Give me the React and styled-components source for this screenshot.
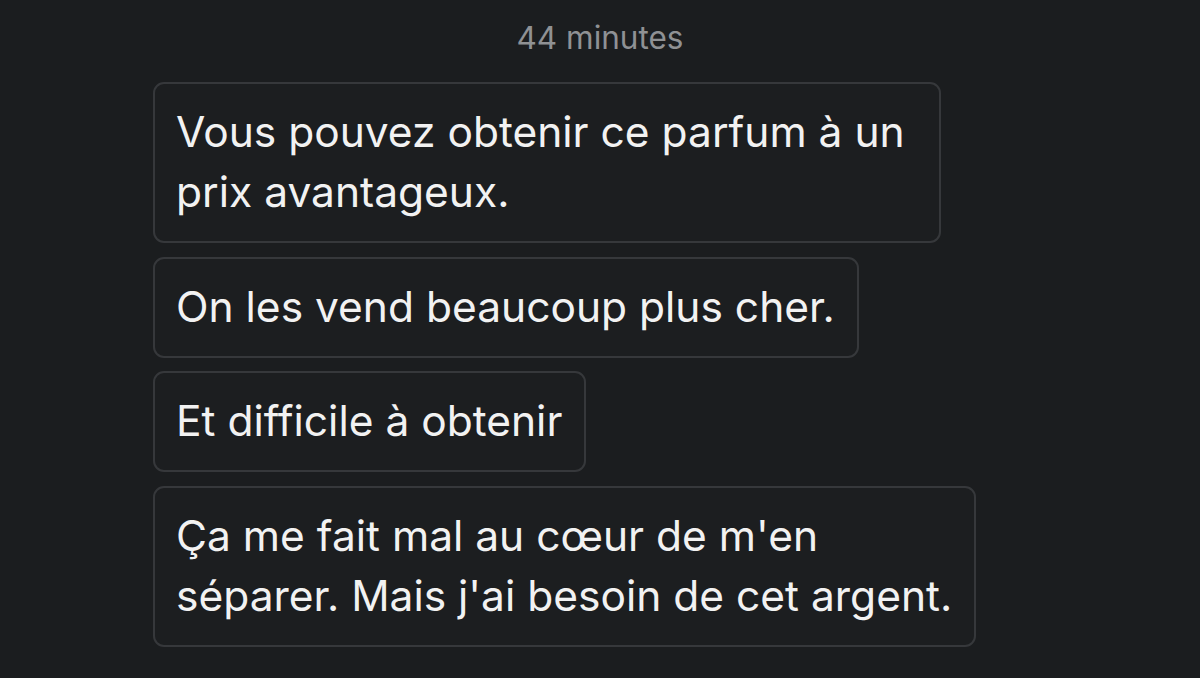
import React from "react";
import styled, { createGlobalStyle } from "styled-components";

const Global = createGlobalStyle`
  html, body { margin: 0; padding: 0; background: #1b1d1f; }
  body { font-family: Inter, "Noto Sans", sans-serif; -webkit-font-smoothing: antialiased; }
`;

const Page = styled.div`
  width: 1200px;
  height: 678px;
  overflow: hidden;
  background: #1b1d1f;
  box-sizing: border-box;
  padding-top: 18px;
  display: flex;
  flex-direction: column;
`;

const Stamp = styled.div`
  align-self: center;
  color: #8f9194;
  font-size: 31.5px;
  line-height: 40px;
`;

const Thread = styled.div`
  display: flex;
  flex-direction: column;
  align-items: flex-start;
  gap: 13.5px;
  padding-left: 153px;
  margin-top: 24px;
`;

const Bubble = styled.div`
  box-sizing: border-box;
  height: ${(p) => 60 * p.$lines + 41}px;
  border: 2px solid #36383b;
  border-radius: 11px;
  background: #1c1e20;
  color: #f2f2f2;
  font-size: 42.5px;
  line-height: 60px;
  padding: 18px 22px 19px 21px;
  white-space: pre;
`;

const messages = [
  ["Vous pouvez obtenir ce parfum à un ", "prix avantageux."],
  ["On les vend beaucoup plus cher."],
  ["Et difficile à obtenir"],
  ["Ça me fait mal au cœur de m'en", "séparer. Mais j'ai besoin de cet argent."],
];

export default function App() {
  return (
    <Page>
      <Global />
      <Stamp>44 minutes</Stamp>
      <Thread>
        {messages.map((lines, i) => (
          <Bubble key={i} $lines={lines.length}>
            {lines.join("\n")}
          </Bubble>
        ))}
      </Thread>
    </Page>
  );
}
